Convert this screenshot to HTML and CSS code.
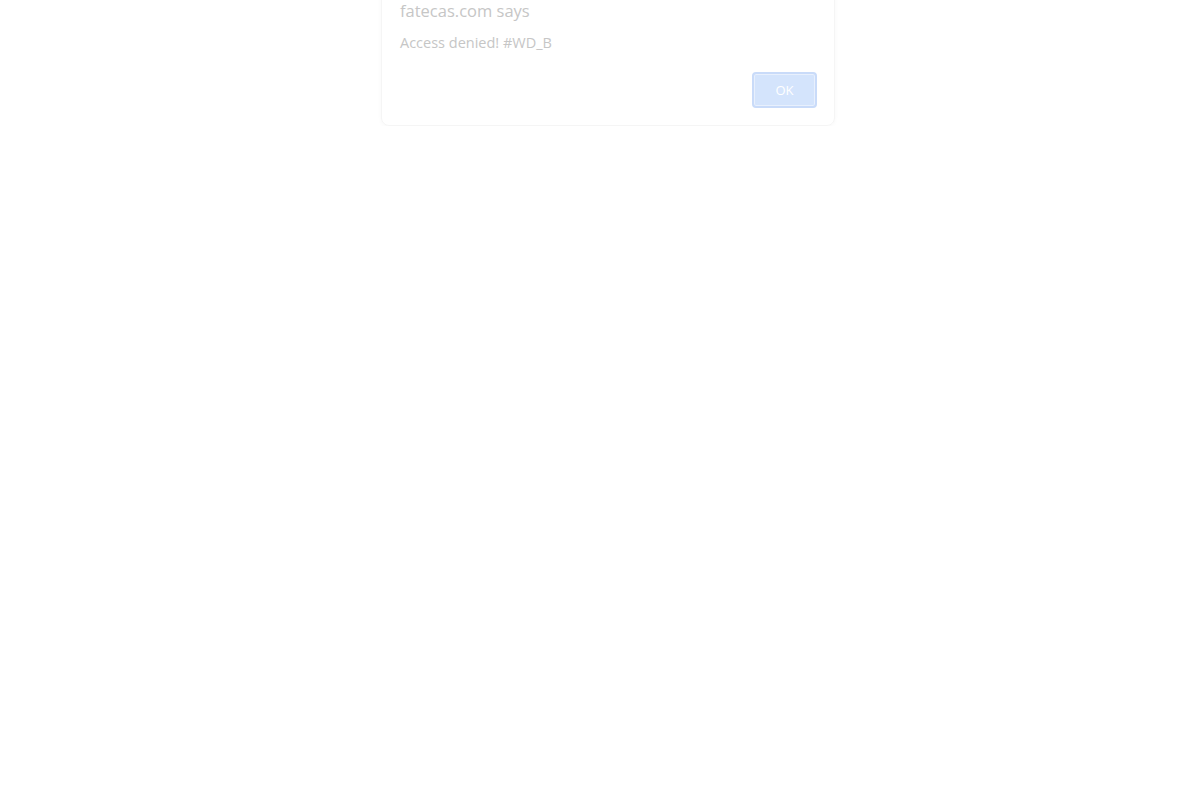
FILE: index.html
```html
<!DOCTYPE html>
<html>
<head>
<meta charset="utf-8">
<link rel="stylesheet" href="styles.css">
</head>
<body>
<div class="page">
  <div class="dialog">
    <div class="title">fatecas.com says</div>
    <div class="message">Access denied! #WD_B</div>
    <div class="actions">
      <button class="ok">OK</button>
    </div>
  </div>
</div>
</body>
</html>
```
FILE: styles.css
```css
html, body {
  margin: 0;
  padding: 0;
  background: #ffffff;
}
.page {
  display: flex;
  justify-content: center;
  padding-left: 16px;
}
.dialog {
  width: 454px;
  margin-top: -40px;
  box-sizing: border-box;
  padding: 40px 17px 17px 18px;
  border: 1px solid #f5f5f5;
  border-radius: 8px;
  box-shadow: 0 1px 4px rgba(0,0,0,0.03);
  font-family: "Open Sans", sans-serif;
  color: #c6c6c6;
}
.title {
  font-size: 16.5px;
  line-height: 22px;
  margin-top: -1px;
}
.message {
  font-size: 14.5px;
  line-height: 20px;
  margin-top: 11px;
}
.actions {
  display: flex;
  justify-content: flex-end;
  margin-top: 19px;
}
.ok {
  width: 65px;
  height: 36px;
  box-sizing: border-box;
  border: 2px solid #c9dbf9;
  border-radius: 4px;
  background: #d4e4fc;
  box-shadow: inset 0 0 0 1px #e8f0fd;
  color: #ffffff;
  font-family: "Open Sans", sans-serif;
  font-size: 13px;
  padding: 0;
}
```
